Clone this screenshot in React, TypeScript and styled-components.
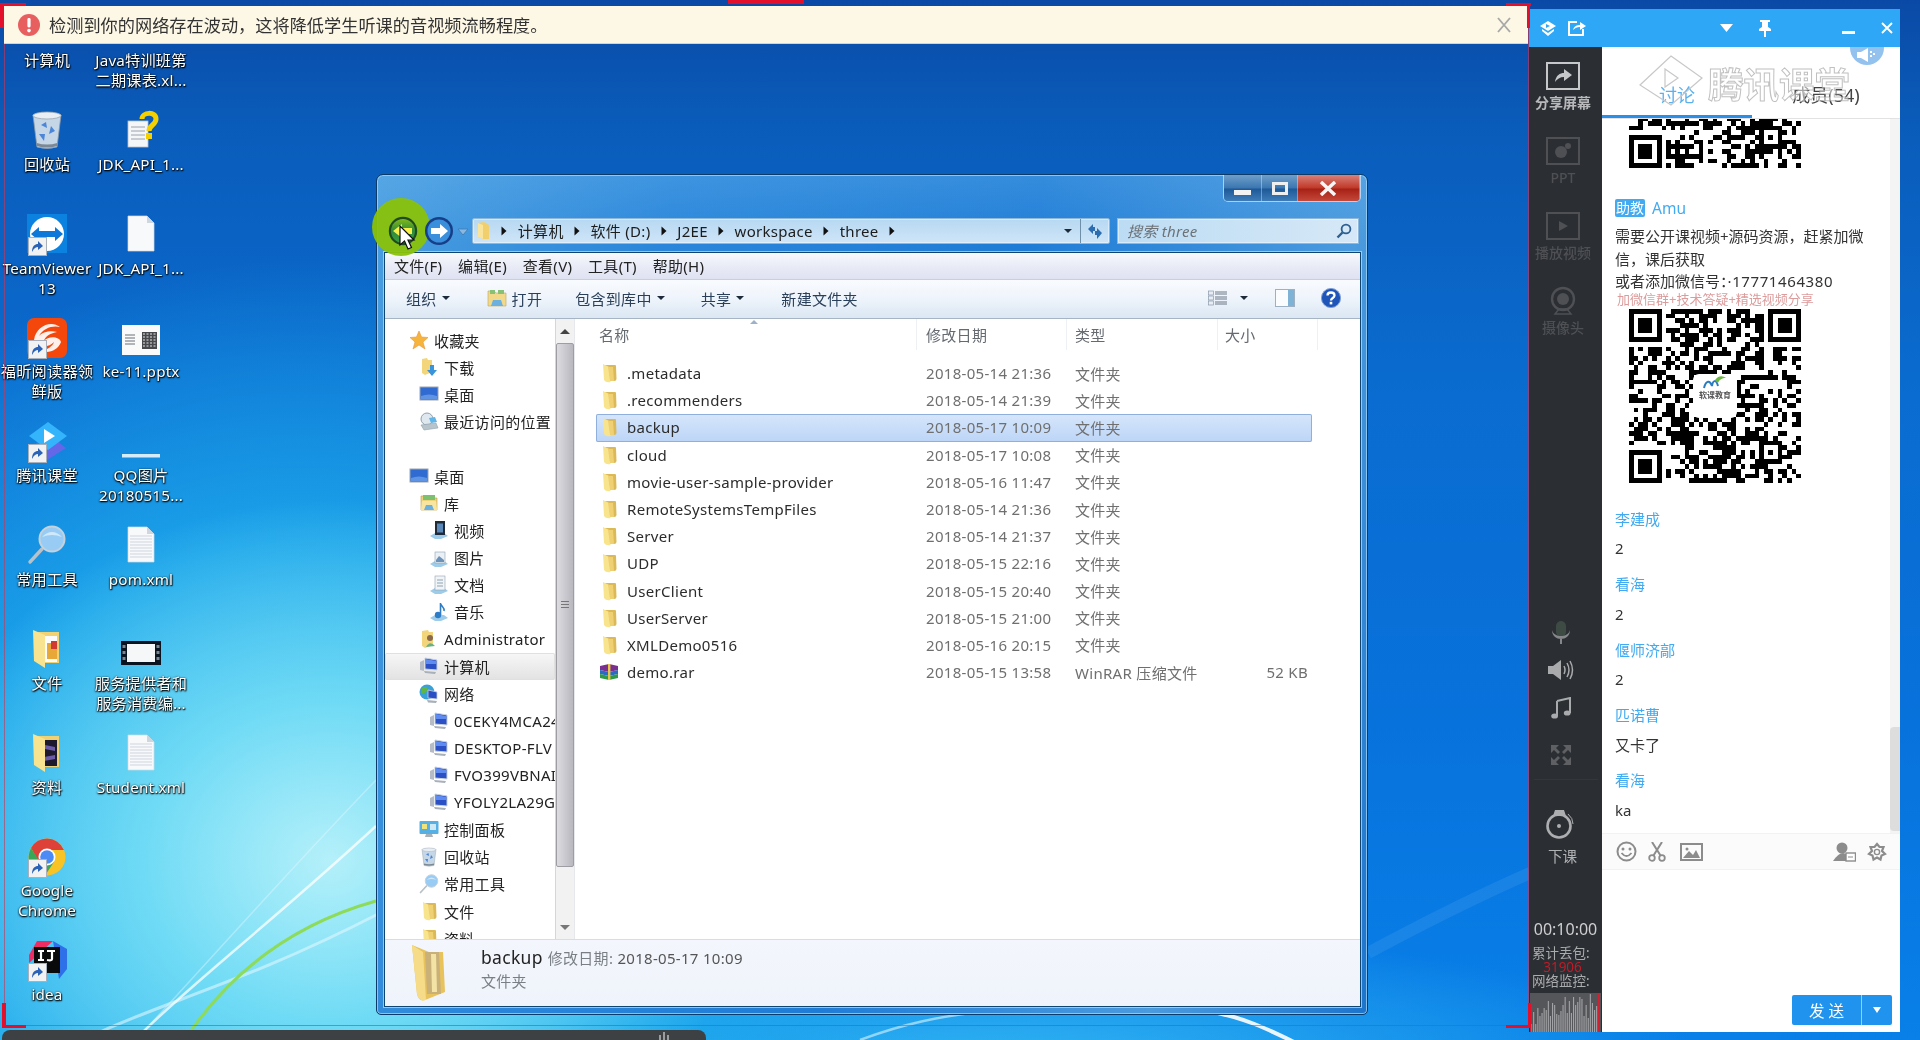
import React from "react";
import styled, { createGlobalStyle } from "styled-components";

const FONT = `"Noto Sans", "Noto Sans CJK SC", sans-serif`;

const Global = createGlobalStyle`
  html, body { margin: 0; padding: 0; width: 1920px; height: 1040px; overflow: hidden; background: #0a60c0; }
  * { box-sizing: border-box; }
  body { font-family: ${FONT}; }
`;

/* ---------- page ---------- */
const Desktop = styled.div`
  position: relative;
  width: 1920px;
  height: 1040px;
  overflow: hidden;
  filter: blur(0.35px);
  background:
    radial-gradient(ellipse 420px 360px at 330px 860px, #b4f0fa 0%, rgba(120, 224, 246, 0.85) 45%, rgba(60, 190, 240, 0) 100%),
    radial-gradient(ellipse 640px 640px at 300px 900px, #4cc8f2 0%, rgba(30, 170, 236, 0.9) 55%, rgba(14, 130, 226, 0) 100%),
    radial-gradient(ellipse 700px 130px at 1000px 1060px, #30b4f2 0%, rgba(30, 160, 240, 0) 100%),
    linear-gradient(180deg, #0a4aa6 0%, #0a5cba 12%, #0a6cd0 38%, #0872dc 70%, #0880e8 100%);
`;

const Wallpaper = styled.svg`
  position: absolute;
  left: 0;
  top: 0;
`;

const IconGrid = styled.div`
  position: absolute;
  left: 0;
  top: 3px;
  display: grid;
  grid-auto-flow: column;
  grid-template-rows: repeat(10, 103.8px);
  grid-template-columns: 94px 94px;
`;

const DeskItem = styled.div`
  display: flex;
  flex-direction: column;
  align-items: center;
`;

const DeskIconBox = styled.div`
  position: relative;
  width: 40px;
  height: 47px;
  display: flex;
  align-items: center;
  justify-content: center;
`;

const DeskLabel = styled.div`
  width: 94px;
  font-size: 15.2px;
  letter-spacing: 0.2px;
  line-height: 20px;
  color: #fff;
  text-align: center;
  white-space: pre-line;
  text-shadow: 0 1px 2px #000, 1px 1px 1px rgba(0, 0, 0, 0.7), 0 0 2px rgba(0, 0, 0, 0.6);
`;

const Badge = styled.svg`
  position: absolute;
  left: 1px;
  bottom: 2px;
`;

/* ---------- banner & frame ---------- */
const Banner = styled.div`
  position: absolute;
  left: 4px;
  top: 6px;
  width: 1524px;
  height: 38px;
  background: #fdf8e6;
  border-bottom: 1px solid #d8d4c0;
  display: flex;
  align-items: center;
  padding: 0 16px 0 14px;
  gap: 9px;
  z-index: 5;
`;

const BannerText = styled.span`
  flex: 1;
  font-size: 17.2px;
  color: #333;
  padding-bottom: 1px;
`;

const Corner = styled.div<{ $l: number; $t: number; $w: number; $h: number }>`
  position: absolute;
  left: ${(p) => p.$l}px;
  top: ${(p) => p.$t}px;
  width: ${(p) => p.$w}px;
  height: ${(p) => p.$h}px;
  background: #e2102a;
  z-index: 9;
`;

const ThinLine = styled(Corner)`
  background: rgba(214, 50, 80, 0.6);
  z-index: 3;
`;

const BottomBar = styled.div`
  position: absolute;
  left: 2px;
  top: 1030px;
  width: 704px;
  height: 10px;
  background: #3e4144;
  border-radius: 8px 8px 0 0;
  color: #ccc;
  display: flex;
  justify-content: flex-end;
  padding-right: 36px;
`;

/* ---------- explorer window ---------- */
const Win = styled.div`
  position: absolute;
  left: 376px;
  top: 174px;
  width: 992px;
  height: 841px;
  border: 1px solid #0d3a66;
  border-radius: 7px 7px 5px 5px;
  box-shadow: inset 0 0 0 1px rgba(170, 215, 245, 0.75);
  background:
    linear-gradient(180deg, rgba(120, 190, 240, 0.25) 0, rgba(30, 130, 220, 0) 70px),
    linear-gradient(105deg, #4a9ee0 0%, #2a86da 25%, #1f7cd6 55%, #4a9ade 82%, #1c74cc 100%);
  padding: 0 6px 7px 7px;
  display: flex;
  flex-direction: column;
  font-size: 15px;
  letter-spacing: 0.3px;
`;

const TitleBar = styled.div`
  height: 42px;
  display: flex;
  justify-content: flex-end;
  align-items: flex-start;
`;

const Captions = styled.div`
  width: 138px;
  height: 27px;
  display: flex;
  border: 1px solid rgba(255, 255, 255, 0.55);
  border-top: none;
  border-radius: 0 0 5px 5px;
  overflow: hidden;
`;

const CapBtn = styled.div<{ $w: number; $close?: boolean }>`
  width: ${(p) => p.$w}px;
  display: flex;
  align-items: center;
  justify-content: center;
  border-right: 1px solid rgba(255, 255, 255, 0.35);
  background: ${(p) =>
    p.$close
      ? "linear-gradient(180deg,#d88078 0%,#c23c2c 48%,#a82216 55%,#c4483a 100%)"
      : "linear-gradient(180deg,#6f9fca 0%,#3c78b2 48%,#1f5a98 55%,#3d7cb8 100%)"};
`;

const NavRow = styled.div`
  position: relative;
  z-index: 1;
  height: 27px;
  margin-bottom: 8px;
  padding-left: 4px;
  display: flex;
  align-items: center;
`;

const NavBtn = styled.svg`
  flex: none;
`;

const NavDrop = styled.svg`
  flex: none;
  margin: 2px 3px 0 3px;
`;

const Highlight = styled.div`
  position: absolute;
  left: -5px;
  top: 23px;
  width: 58px;
  height: 58px;
  border-radius: 50%;
  background: rgb(138, 194, 8);
  opacity: 0.95;
  pointer-events: none;
`;

const Cursor = styled.svg`
  position: absolute;
  left: 22px;
  top: 50px;
  z-index: 2;
`;

const AddressBar = styled.div`
  flex: 1;
  height: 26px;
  display: flex;
  align-items: center;
  background: linear-gradient(180deg, #b7d8f2, #cfe5f7);
  border: 1px solid #8db8dc;
  box-shadow: inset 0 0 0 1px rgba(255, 255, 255, 0.4);
  border-radius: 2px;
`;

const Crumbs = styled.div`
  flex: 1;
  display: flex;
  align-items: center;
  gap: 10.4px;
  padding-left: 4px;
  color: #1c1c1c;
  white-space: nowrap;
`;

const RefreshCell = styled.div`
  width: 29px;
  height: 100%;
  margin-left: 8px;
  border-left: 1px solid #6f8fa8;
  display: flex;
  align-items: center;
  justify-content: center;
`;

const SearchBox = styled.div`
  width: 242px;
  height: 26px;
  margin: 0 2px 0 7px;
  display: flex;
  align-items: center;
  justify-content: space-between;
  padding: 0 6px 0 9px;
  background: linear-gradient(90deg, #bcdcf3, #d6e8f7);
  border: 1px solid #8db8dc;
  box-shadow: inset 0 0 0 1px rgba(255, 255, 255, 0.4);
  font-style: italic;
  color: #6d7277;
`;

const Client = styled.div`
  flex: 1;
  min-height: 0;
  display: flex;
  flex-direction: column;
  background: #fff;
  border: 1px solid #0f4573;
  box-shadow: 0 0 0 1px rgba(190, 225, 250, 0.7);
`;

const MenuBar = styled.div`
  height: 27px;
  flex: none;
  display: flex;
  align-items: center;
  gap: 15.8px;
  padding: 0 0 2px 9px;
  color: #222;
  background: linear-gradient(180deg, #f8f9fd 0%, #e9ebf6 50%, #dfe2f1 100%);
  border-bottom: 1px solid #c8cfdf;
`;

const ToolBar = styled.div`
  height: 39px;
  flex: none;
  display: flex;
  align-items: center;
  padding: 0 19px 2px 21px;
  color: #2a3f5a;
  background: linear-gradient(180deg, #f9fbfe 0%, #eef4fb 50%, #dbe7f3 100%);
  border-bottom: 1px solid #a6b4c4;
`;

const ToolItem = styled.div<{ $mr?: number; $gap?: number }>`
  display: flex;
  align-items: center;
  gap: ${(p) => p.$gap ?? 5}px;
  margin-right: ${(p) => p.$mr ?? 0}px;
  white-space: nowrap;
`;

const Caret = styled.i`
  display: block;
  width: 0;
  height: 0;
  border-left: 4px solid transparent;
  border-right: 4px solid transparent;
  border-top: 4px solid #1c2a3a;
`;

const Spacer = styled.div`
  flex: 1;
`;

const Panes = styled.div`
  flex: 1;
  min-height: 0;
  display: flex;
`;

const NavPane = styled.div`
  width: 170px;
  flex: none;
  overflow: hidden;
  padding-top: 8px;
`;

const NavItem = styled.div<{ $level: number; $active?: boolean }>`
  height: 27.2px;
  display: flex;
  align-items: center;
  gap: 5px;
  padding: 0 0 1px ${(p) => 24 + p.$level * 10}px;
  color: #222;
  white-space: nowrap;
  overflow: hidden;
  background: ${(p) => (p.$active ? "linear-gradient(180deg,#f7f7f7,#e2e2e2)" : "none")};
  border-radius: 2px;
  box-shadow: ${(p) => (p.$active ? "inset 0 0 0 1px #e0e0e0" : "none")};

  svg {
    flex: none;
  }
`;

const NavGap = styled.div`
  height: 27.2px;
`;

const Scroll = styled.div`
  width: 20px;
  flex: none;
  background: #f2f2f3;
  border-left: 1px solid #d6d6d8;
  border-right: 1px solid #e6e8ec;
  display: flex;
  flex-direction: column;
  align-items: center;
`;

const ScrollBtn = styled.div`
  height: 24px;
  flex: none;
  display: flex;
  align-items: center;
  justify-content: center;
`;

const Thumb = styled.div`
  width: 18px;
  height: 524px;
  flex: none;
  background: linear-gradient(90deg, #dcdce0 0%, #c8c8ce 55%, #b8b8be 100%);
  border: 1px solid #9d9da3;
  border-radius: 2px;
  display: flex;
  align-items: center;
  justify-content: center;
`;

const Grip = styled.i`
  display: block;
  width: 8px;
  height: 8px;
  background: repeating-linear-gradient(180deg, #777 0 1px, transparent 1px 3px);
`;

const ArrowUp = styled.i`
  display: block;
  width: 0;
  height: 0;
  border-left: 5px solid transparent;
  border-right: 5px solid transparent;
  border-bottom: 5px solid #444;
`;

const ArrowDown = styled.i`
  display: block;
  width: 0;
  height: 0;
  border-left: 5px solid transparent;
  border-right: 5px solid transparent;
  border-top: 5px solid #777;
`;

const ListPane = styled.div`
  flex: 1;
  min-width: 0;
  position: relative;
`;

const ListHead = styled.div`
  height: 41px;
  display: grid;
  grid-template-columns: 342px 150px 151px 100px;
  color: #656a70;
`;

const HeadCell = styled.div<{ $pl: number }>`
  height: 31px;
  display: flex;
  align-items: center;
  padding-left: ${(p) => p.$pl}px;
  border-right: 1px solid #eef0f3;
`;

const SortMark = styled.i`
  position: absolute;
  left: 175px;
  top: 1px;
  width: 0;
  height: 0;
  border-left: 4px solid transparent;
  border-right: 4px solid transparent;
  border-bottom: 4px solid #9db2c9;
`;

const Row = styled.div<{ $sel?: boolean }>`
  margin-left: 21px;
  width: 716px;
  height: 27.2px;
  padding-bottom: 1px;
  display: grid;
  grid-template-columns: 31px 299px 149px 1fr auto;
  align-items: center;
  border-radius: 2px;
  background: ${(p) => (p.$sel ? "linear-gradient(180deg,#d6e6fb,#bcd5f7)" : "none")};
  box-shadow: ${(p) => (p.$sel ? "inset 0 0 0 1px #8fb0dc" : "none")};
`;

const RowIcon = styled.div`
  padding-left: 3px;
  display: flex;
  align-items: center;
`;

const RowName = styled.span`
  color: #2c2c2c;
`;

const RowMeta = styled.span`
  color: #6f6f6f;
  white-space: nowrap;
`;

const RowSize = styled(RowMeta)`
  padding-right: 4px;
`;

const Details = styled.div`
  height: 67px;
  flex: none;
  display: flex;
  align-items: center;
  gap: 35px;
  padding-left: 26px;
  background: linear-gradient(180deg, #f3f6fc, #eff3fb);
  border-top: 1px solid #d8dbe8;
`;

const DetailText = styled.div`
  display: flex;
  flex-direction: column;
  gap: 1px;
  margin-top: -10px;
`;

const DetailTop = styled.div`
  display: flex;
  align-items: baseline;
  gap: 5px;
  color: #555;
`;

const DetailName = styled.span`
  font-size: 17.5px;
  color: #222;
`;

const DetailLabel = styled.span`
  color: #7a7f86;
`;

const DetailType = styled.div`
  color: #7a7f86;
`;

/* ---------- classroom panel ---------- */
const Panel = styled.div`
  position: absolute;
  left: 1529px;
  top: 9px;
  width: 371px;
  height: 1023px;
  display: grid;
  grid-template-columns: 73px 298px;
  grid-template-rows: 38px 985px;
  background: #fff;
  z-index: 6;
`;

const PanelHead = styled.div`
  grid-column: 1 / 3;
  background: #2da7f6;
  display: flex;
  align-items: center;
  padding: 0 7px 0 11px;
`;

const Side = styled.div`
  background: #2b2e33;
  display: flex;
  flex-direction: column;
  align-items: center;
  min-height: 0;
`;

const SideTool = styled.div<{ $on?: boolean }>`
  height: 75px;
  width: 100%;
  padding: 14px 5px 0 0;
  display: flex;
  flex-direction: column;
  align-items: center;
  font-size: 14px;
  font-weight: ${(p) => (p.$on ? 600 : 500)};
  line-height: 16px;
  color: ${(p) => (p.$on ? "#b8b9bb" : "#4e5054")};
`;

const SideToolIcon = styled.div`
  height: 30px;
  margin-bottom: 4px;
  display: flex;
  align-items: center;
`;

const SideIcon = styled.div<{ $mt?: number }>`
  width: 100%;
  height: 30px;
  padding-right: 10px;
  margin-top: ${(p) => p.$mt ?? 0}px;
  display: flex;
  align-items: center;
  justify-content: center;
  flex: none;
`;

const SideRule = styled.div`
  width: 64px;
  height: 1px;
  margin-top: 9px;
  background: #33363b;
`;

const BellLabel = styled.div`
  margin-top: 9px;
  padding-right: 6px;
  font-size: 14.6px;
  line-height: 16px;
  color: #b0b1b3;
`;

const Stats = styled.div`
  margin-top: auto;
  width: 100%;
  display: flex;
  flex-direction: column;
  color: #aaabad;
`;

const Timer = styled.div`
  font-size: 16px;
  line-height: 20px;
  color: #cfcfd0;
  text-align: center;
  margin-bottom: 7px;
`;

const StatLabel = styled.div`
  font-size: 13.5px;
  line-height: 14px;
  padding-left: 3px;
`;

const StatValue = styled.div`
  font-size: 13.5px;
  line-height: 14px;
  color: #c41a26;
  text-align: center;
  padding-right: 6px;
`;

const Monitor = styled.svg`
  margin: 5px 0 0 1px;
  display: block;
`;

const Main = styled.div`
  display: flex;
  flex-direction: column;
  min-height: 0;
  position: relative;
`;

const Tabs = styled.div`
  height: 72px;
  flex: none;
  position: relative;
  display: grid;
  grid-template-columns: 150px 148px;
  border-bottom: 1px solid #e2e2e2;
  overflow: hidden;
`;

const Tab = styled.div<{ $on?: boolean }>`
  display: flex;
  justify-content: center;
  padding-top: 37px;
  font-size: 18px;
  line-height: 22px;
  color: ${(p) => (p.$on ? "#5ab0ee" : "#444")};
  border-bottom: 3px solid ${(p) => (p.$on ? "#2a8fe8" : "transparent")};
`;

const Watermark = styled.div`
  position: absolute;
  left: 106px;
  top: 14px;
  font-size: 35.5px;
  line-height: 46px;
  font-weight: 700;
  color: rgba(255, 255, 255, 0.5);
  -webkit-text-stroke: 1px rgba(150, 150, 150, 0.6);
  white-space: nowrap;
`;

const WatermarkLogo = styled.svg`
  position: absolute;
  left: 36px;
  top: 8px;
`;

const Megaphone = styled.div`
  position: absolute;
  left: 248px;
  top: -16px;
  width: 34px;
  height: 34px;
  border-radius: 50%;
  background: #94c2ef;
  display: flex;
  align-items: flex-end;
  justify-content: center;
  padding-bottom: 3px;
`;

const ChatWrap = styled.div`
  height: 714px;
  flex: none;
  display: flex;
`;

const Chat = styled.div`
  flex: 1;
  overflow: hidden;
  padding-left: 13px;
  color: #333;
`;

const QrClip = styled.div`
  height: 49px;
  width: 172px;
  margin-left: 14px;
  display: flex;
  align-items: flex-end;
  overflow: hidden;
`;

const QrSvg = styled.svg`
  flex: none;
  display: block;
`;

const Author = styled.div`
  margin-top: 31px;
  height: 18px;
  display: flex;
  align-items: center;
  gap: 7px;
  font-size: 15.5px;
  color: #41aaf0;
`;

const RoleTag = styled.span`
  width: 30px;
  height: 18px;
  background: #41aaf0;
  color: #fff;
  border-radius: 2px;
  font-size: 14px;
  line-height: 18px;
  text-align: center;
`;

const Msg = styled.div`
  width: 264px;
  margin-top: 8px;
  font-size: 15px;
  line-height: 22.6px;
`;

const WechatNo = styled.span`
  letter-spacing: 0.6px;
`;

const Promo = styled.div`
  margin-left: 2px;
  height: 16px;
  font-size: 13px;
  line-height: 13px;
  color: #dc9c9c;
  white-space: nowrap;
`;

const QrBlock = styled.div`
  position: relative;
  width: 172px;
  height: 174px;
  margin-left: 14px;
`;

const QrLogo = styled.div`
  position: absolute;
  left: 64px;
  top: 65px;
  width: 44px;
  height: 44px;
  background: #fff;
  border-radius: 6px;
  display: flex;
  flex-direction: column;
  align-items: center;
  font-size: 8px;
  line-height: 9px;
  font-weight: 700;
  color: #555;
`;

const Thread = styled.div`
  margin-top: 26px;
`;

const Pair = styled.div`
  margin-bottom: 15.8px;
`;

const Nick = styled.div`
  font-size: 15px;
  line-height: 20px;
  color: #41aaf0;
  margin-bottom: 9.6px;
`;

const Said = styled.div`
  font-size: 15px;
  line-height: 20px;
  color: #333;
`;

const ChatTrack = styled.div`
  width: 10px;
  flex: none;
  background: #f4f4f4;
  padding-top: 608px;
`;

const ChatThumb = styled.div`
  height: 104px;
  background: #dddddd;
  border-radius: 4px 0 0 4px;
`;

const InputBar = styled.div`
  height: 37px;
  flex: none;
  display: flex;
  align-items: center;
  gap: 11px;
  padding: 0 13px 0 14px;
  background: #fbfbfb;
  border-top: 1px solid #f2f2f2;
  border-bottom: 1px solid #f2f2f2;
`;

const Compose = styled.div`
  flex: 1;
  display: flex;
  justify-content: flex-end;
  align-items: flex-end;
  padding: 0 8px 7px 0;
`;

const SendBtn = styled.div`
  width: 100px;
  height: 30px;
  display: flex;
  background: #1f93ee;
  border-radius: 2px;
  color: #fff;
  font-size: 15.5px;
`;

const SendLabel = styled.div`
  width: 70px;
  display: flex;
  align-items: center;
  justify-content: center;
  border-right: 1px solid rgba(255, 255, 255, 0.55);
`;

const SendDrop = styled.div`
  flex: 1;
  display: flex;
  align-items: center;
  justify-content: center;
`;

const SendCaret = styled.i`
  display: block;
  width: 0;
  height: 0;
  border-left: 4px solid transparent;
  border-right: 4px solid transparent;
  border-top: 6px solid #fff;
`;

const HeadGap = styled.div<{ $w: number }>`
  width: ${(p) => p.$w}px;
  flex: none;
`;

/* ---------- drawings ---------- */
const Folder = ({ s = 20 }: { s?: number }) => (
  <svg width={s} height={s} viewBox="0 0 20 20">
    <path d="M6 2 H16 Q17 2 17 3 L17.5 16 Q17.5 18 15 18 H8 Z" fill="#dcb957" />
    <path d="M4 1 L10 4 L11.5 19 Q7 20 5 17 Z" fill="#f9e48e" />
    <path d="M9 4 H14 L15 18 H11 Z" fill="#efd072" />
  </svg>
);

const Computer = ({ s = 20 }: { s?: number }) => (
  <svg width={s} height={s} viewBox="0 0 20 20">
    <path d="M6 2 L18 4 L18 14 L6 13 Z" fill="#2b4fc4" stroke="#c9d2dc" strokeWidth="1" />
    <path d="M7 3 L17 5 L17 8 L7 8 Z" fill="#5f8cf0" />
    <path d="M1 6 L5 4 L5 15 L1 14 Z" fill="#b5bcc6" />
    <path d="M5 15 L17 16 L16 18 L6 17 Z" fill="#a8b0ba" />
  </svg>
);

const Arrow = () => (
  <svg width="6" height="10" viewBox="0 0 6 10" style={{ flex: "none" }}>
    <path d="M0.5 0.5 L5.5 5 L0.5 9.5 Z" fill="#111" />
  </svg>
);

const Doc = ({ lined }: { lined?: boolean }) => (
  <svg width="30" height="38" viewBox="0 0 30 38">
    <path d="M2 1 H21 L28 8 V36 H2 Z" fill="#f8f9fb" stroke="#d6dae0" strokeWidth="0.7" />
    <path d="M21 1 V8 H28 Z" fill="#d0d6de" />
    {lined && [10, 13, 16, 19, 22, 25, 28, 31].map((y) => <path key={y} d={`M4 ${y} H26`} stroke="#cfd5de" strokeWidth="1" />)}
  </svg>
);

const Shortcut = () => (
  <Badge width="19" height="19" viewBox="0 0 19 19">
    <rect x="0.5" y="0.5" width="18" height="18" fill="#f2f2f2" stroke="#a8b0bb" />
    <path d="M4 15 C4 9 7 7 10 7 V4 L15 9 L10 13 V10 C8 10 6 11 4 15 Z" fill="#2a62b8" />
  </Badge>
);

const Recycle = ({ s = 40 }: { s?: number }) => (
  <svg width={s} height={s} viewBox="0 0 40 40">
    <path d="M6 5 Q20 0 34 5 L30 37 Q20 40 10 37 Z" fill="#c5d6e6" stroke="#8e9aa6" strokeWidth="0.8" />
    <ellipse cx="20" cy="5.5" rx="14" ry="3.5" fill="#e8eef4" stroke="#9aa6b2" strokeWidth="0.8" />
    <path d="M14 15 L19 12 L20 18 Z M24 16 L28 21 L22 24 Z M12 24 L18 24 L17 31 Z" fill="#4c86d8" />
    <path d="M10 36 Q20 39 30 36 L30.4 33 Q20 36 9.7 33 Z" fill="#7c8894" />
  </svg>
);

const HelpDoc = () => (
  <svg width="40" height="40" viewBox="0 0 40 40">
    <rect x="7" y="11" width="20" height="26" fill="#f5f6f8" stroke="#b8c0cc" strokeWidth="0.8" />
    {[17, 21, 25, 29].map((y) => <path key={y} d={`M10 ${y} H24`} stroke="#9aa2ae" strokeWidth="1" />)}
    <path d="M21 9 C21 2 35 1 35 9 C35 15 28 15 28 21" fill="none" stroke="#f5d000" strokeWidth="5" />
    <rect x="25" y="23" width="6" height="6" fill="#f5d000" />
  </svg>
);

const TeamV = () => (
  <svg width="40" height="40" viewBox="0 0 40 40">
    <rect width="40" height="39" fill="#0c82e0" />
    <circle cx="20" cy="20" r="17" fill="#fff" />
    <path d="M4 20 L12 13 V17 H28 V13 L36 20 L28 27 V23 H12 V27 Z" fill="#0e78d8" />
  </svg>
);

const Foxit = () => (
  <svg width="40" height="40" viewBox="0 0 40 40">
    <rect width="40" height="40" rx="7" fill="#f4470c" />
    <path d="M7 22 C9 8 24 2 33 9 C26 7 16 10 12 18 C15 14 24 12 30 14 C24 15 18 18 17 23 C21 18 32 18 34 24 C31 32 22 36 14 33 C20 32 26 28 27 24 C22 30 10 30 7 22 Z" fill="#fff" opacity="0.92" />
  </svg>
);

const Tencent = () => (
  <svg width="40" height="40" viewBox="0 0 40 40">
    <path d="M4 26 L20 38 L39 26 L30 19 L12 19 Z" fill="#6468e8" />
    <path d="M2 14 L21 0 L40 14 L21 28 Z" fill="#34b4fb" />
    <path d="M17 7 L28 14 L17 21 Z" fill="#fff" />
  </svg>
);

const Lens = ({ s = 40 }: { s?: number }) => (
  <svg width={s} height={s} viewBox="0 0 40 40">
    <path d="M15 24 L3 37" stroke="#b8c0c8" strokeWidth="3.4" strokeLinecap="round" />
    <circle cx="25" cy="14" r="12.5" fill="#98ccf4" stroke="#c5d2dc" strokeWidth="2" />
    <path d="M15 12 Q25 2 35 12 Q25 8 15 12 Z" fill="#cfe8fb" />
  </svg>
);

const BigFolder = ({ inner }: { inner: "colors" | "dark" }) => (
  <svg width="30" height="40" viewBox="0 0 30 40">
    <path d="M6 3 H27 V34 H10 Z" fill="#f0d272" />
    <path d="M10 7 H25 V33 H10 Z" fill={inner === "dark" ? "#1c1a2c" : "#fbfbfb"} />
    {inner === "colors" ? (
      <path d="M15 14 H25 V30 H15 Z" fill="#e8a838" />
    ) : (
      <path d="M13 12 L23 14 V18 L13 16 Z M12 24 L23 22 V26 L12 28 Z" fill="#6c5ca8" />
    )}
    {inner === "colors" && <path d="M19 12 H25 V20 H19 Z" fill="#d03a30" />}
    <path d="M1 1 L13 6 V39 L2 32 Z" fill="#f8e391" />
  </svg>
);

const Film = () => (
  <svg width="40" height="26" viewBox="0 0 40 26">
    <rect width="40" height="24" fill="#0a1420" />
    <rect x="6" y="3" width="28" height="18" fill="#f6f7f9" />
    {[4, 10, 16].map((y) => <rect key={y} x="1.5" y={y} width="3" height="3" fill="#7a8692" />)}
    {[4, 10, 16].map((y) => <rect key={y + 1} x="35.5" y={y} width="3" height="3" fill="#7a8692" />)}
  </svg>
);

const Chrome = () => (
  <svg width="38" height="38" viewBox="0 0 38 38">
    <circle cx="19" cy="19" r="18.5" fill="#f7c325" />
    <path d="M19 0.5 A18.5 18.5 0 0 0 3 10 L11 24 L19 12 H36 A18.5 18.5 0 0 0 19 0.5 Z" fill="#de4137" />
    <path d="M3 10 A18.5 18.5 0 0 0 17 37.4 L26 24 H12 Z" fill="#3aa757" />
    <circle cx="19" cy="19" r="8.5" fill="#fff" />
    <circle cx="19" cy="19" r="6.8" fill="#4c8bf5" />
  </svg>
);

const Idea = () => (
  <svg width="40" height="40" viewBox="0 0 40 40">
    <path d="M2 14 L10 0 H26 L2 22 Z" fill="#f02d62" />
    <path d="M26 0 L40 8 V28 L32 38 Z" fill="#2e70e8" />
    <rect x="7" y="6" width="26" height="26" fill="#0a0a0a" />
    <path d="M11 10 H17 M14 10 V19 M11 19 H17 M20 10 H28 M25 10 V18 Q25 20 20 19" stroke="#fff" strokeWidth="2.2" fill="none" />
    <path d="M11 28 H19" stroke="#fff" strokeWidth="1.5" />
  </svg>
);

const PptThumb = () => (
  <svg width="38" height="30" viewBox="0 0 38 30" style={{ marginTop: 4 }}>
    <rect width="38" height="30" fill="#fafafa" />
    {[10, 13, 16, 19].map((y) => <path key={y} d={`M3 ${y} H13`} stroke="#8a8f96" strokeWidth="1.3" />)}
    <rect x="20" y="7" width="15" height="17" fill="#47494d" />
    {[9, 12, 15, 18, 21].map((y) => <path key={y} d={`M21 ${y} H34`} stroke="#e8e8e8" strokeWidth="1" strokeDasharray="2 1.5" />)}
  </svg>
);

const ThinStrip = () => (
  <svg width="38" height="30" viewBox="0 0 38 30" style={{ marginTop: 30 }}>
    <rect y="12" width="38" height="3.5" fill="#d6ecfa" />
  </svg>
);

type Item = { label: string; icon: React.ReactNode; link?: boolean };
const desk: Item[] = [
  { label: "计算机", icon: null },
  { label: "回收站", icon: <Recycle /> },
  { label: "TeamViewer\n13", icon: <TeamV />, link: true },
  { label: "福昕阅读器领\n鲜版", icon: <Foxit />, link: true },
  { label: "腾讯课堂", icon: <Tencent />, link: true },
  { label: "常用工具", icon: <Lens /> },
  { label: "文件", icon: <BigFolder inner="colors" /> },
  { label: "资料", icon: <BigFolder inner="dark" /> },
  { label: "Google\nChrome", icon: <Chrome />, link: true },
  { label: "idea", icon: <Idea />, link: true },
  { label: "Java特训班第\n二期课表.xl...", icon: null },
  { label: "JDK_API_1...", icon: <HelpDoc /> },
  { label: "JDK_API_1...", icon: <Doc /> },
  { label: "ke-11.pptx", icon: <PptThumb /> },
  { label: "QQ图片\n20180515...", icon: <ThinStrip /> },
  { label: "pom.xml", icon: <Doc lined /> },
  { label: "服务提供者和\n服务消费编...", icon: <span style={{ marginTop: 14 }}><Film /></span> },
  { label: "Student.xml", icon: <Doc lined /> },
];

const SmStar = () => (
  <svg width="20" height="20" viewBox="0 0 20 20">
    <path d="M10 1 L12.5 7 L19 7.5 L14 12 L16 19 L10 15 L4 19 L6 12 L1 7.5 L7.5 7 Z" fill="#f7b43c" stroke="#e8943a" strokeWidth="0.6" />
  </svg>
);
const SmDownload = () => (
  <svg width="20" height="20" viewBox="0 0 20 20">
    <path d="M3 2 L8 1 L9 3 H13 L13 15 L6 18 L3 16 Z" fill="#f3d67c" />
    <path d="M11 8 H15 V13 H18 L13 19 L8 13 H11 Z" fill="#3a94dc" />
  </svg>
);
const SmDesktop = () => (
  <svg width="20" height="20" viewBox="0 0 20 20">
    <rect x="1" y="3" width="18" height="13" fill="#2f6bd0" stroke="#9aa6b2" />
    <path d="M2 12 Q10 9 18 12 V15 H2 Z" fill="#5f94e4" />
  </svg>
);
const SmRecent = () => (
  <svg width="20" height="20" viewBox="0 0 20 20">
    <circle cx="8" cy="7" r="6" fill="#dfe8ee" stroke="#8ea2ae" />
    <path d="M2 13 L17 11 L19 16 L5 18 Z" fill="#b8c4cc" stroke="#8ea2ae" strokeWidth="0.6" />
    <path d="M10 6 L16 5 L18 10 L12 11 Z" fill="#5fb4e8" />
  </svg>
);
const SmLib = () => (
  <svg width="20" height="20" viewBox="0 0 20 20">
    <path d="M2 3 H8 L10 5 H18 V17 H2 Z" fill="#f0d27a" stroke="#b99c48" strokeWidth="0.6" />
    <path d="M4 2 H16 V7 H4 Z" fill="#7cc070" />
    <path d="M3 8 H17 L18 17 H2 Z" fill="#f8e6a0" />
    <path d="M7 12 H13 L15 17 H5 Z" fill="#6cb0e0" />
  </svg>
);
const SmVideo = () => (
  <svg width="20" height="20" viewBox="0 0 20 20">
    <path d="M1 16 L6 13 H15 L19 16 L12 19 H6 Z" fill="#9dcbea" />
    <rect x="6" y="1" width="10" height="14" fill="#1f2a38" />
    <rect x="8" y="3.5" width="6" height="9" fill="#5a88b8" />
  </svg>
);
const SmImage = () => (
  <svg width="20" height="20" viewBox="0 0 20 20">
    <path d="M1 16 L6 13 H15 L19 16 L12 19 H6 Z" fill="#9dcbea" />
    <rect x="6" y="4" width="10" height="11" fill="#eaf0f6" stroke="#8ea2ae" strokeWidth="0.6" />
    <path d="M7 12 L10 8 L15 12 V14 H7 Z" fill="#6b92b8" />
  </svg>
);
const SmDocLib = () => (
  <svg width="20" height="20" viewBox="0 0 20 20">
    <path d="M1 16 L6 13 H15 L19 16 L12 19 H6 Z" fill="#9dcbea" />
    <rect x="6" y="1" width="10" height="14" fill="#f2f5f8" stroke="#8ea2ae" strokeWidth="0.6" />
    <path d="M8 5 H14 M8 8 H14 M8 11 H14" stroke="#8ea2ae" />
  </svg>
);
const SmMusic = () => (
  <svg width="20" height="20" viewBox="0 0 20 20">
    <path d="M1 16 L6 13 H15 L19 16 L12 19 H6 Z" fill="#9dcbea" />
    <circle cx="9" cy="13" r="3.2" fill="#2f7cc6" />
    <path d="M11.5 13 V1 C12 5 16 5 15 9" fill="none" stroke="#2f7cc6" strokeWidth="1.6" />
  </svg>
);
const SmUser = () => (
  <svg width="20" height="20" viewBox="0 0 20 20">
    <path d="M3 2 L9 1 L10 3 H14 V16 L6 19 L3 17 Z" fill="#f3d67c" />
    <circle cx="11" cy="9" r="3" fill="#8a6a4a" />
    <path d="M7 18 Q11 11 16 17 Z" fill="#6cb080" />
  </svg>
);
const SmNet = () => (
  <svg width="20" height="20" viewBox="0 0 20 20">
    <circle cx="8" cy="8" r="7.5" fill="#3aa0d8" />
    <path d="M3 4 Q8 1 9 6 Q5 11 2 9 Z" fill="#5eb648" />
    <path d="M9 6 L18 8 L18 15 L9 14 Z" fill="#2b4fc4" stroke="#c9d2dc" strokeWidth="0.8" />
    <path d="M8 16 L18 17 L17 19 L9 18.5 Z" fill="#a8b0ba" />
  </svg>
);
const SmPanel = () => (
  <svg width="20" height="20" viewBox="0 0 20 20">
    <rect x="0.5" y="2" width="19" height="13" rx="1" fill="#56b0e4" />
    <rect x="3" y="5" width="5" height="5" fill="#f2e27a" />
    <rect x="11" y="5" width="6" height="6" fill="#cfe8f6" />
    <path d="M7 15 H13 L14 18 H6 Z" fill="#a8b0ba" />
  </svg>
);

type Nav = { t: string; l: number; i: React.ReactNode; a?: boolean } | null;
const nav: Nav[] = [
  { t: "收藏夹", l: 0, i: <SmStar /> },
  { t: "下载", l: 1, i: <SmDownload /> },
  { t: "桌面", l: 1, i: <SmDesktop /> },
  { t: "最近访问的位置", l: 1, i: <SmRecent /> },
  null,
  { t: "桌面", l: 0, i: <SmDesktop /> },
  { t: "库", l: 1, i: <SmLib /> },
  { t: "视频", l: 2, i: <SmVideo /> },
  { t: "图片", l: 2, i: <SmImage /> },
  { t: "文档", l: 2, i: <SmDocLib /> },
  { t: "音乐", l: 2, i: <SmMusic /> },
  { t: "Administrator", l: 1, i: <SmUser /> },
  { t: "计算机", l: 1, i: <Computer />, a: true },
  { t: "网络", l: 1, i: <SmNet /> },
  { t: "0CEKY4MCA24", l: 2, i: <Computer /> },
  { t: "DESKTOP-FLV", l: 2, i: <Computer /> },
  { t: "FVO399VBNAI", l: 2, i: <Computer /> },
  { t: "YFOLY2LA29G", l: 2, i: <Computer /> },
  { t: "控制面板", l: 1, i: <SmPanel /> },
  { t: "回收站", l: 1, i: <Recycle s={20} /> },
  { t: "常用工具", l: 1, i: <Lens s={20} /> },
  { t: "文件", l: 1, i: <Folder /> },
  { t: "资料", l: 1, i: <Folder /> },
];

const files = [
  [".metadata", "2018-05-14 21:36"],
  [".recommenders", "2018-05-14 21:39"],
  ["backup", "2018-05-17 10:09"],
  ["cloud", "2018-05-17 10:08"],
  ["movie-user-sample-provider", "2018-05-16 11:47"],
  ["RemoteSystemsTempFiles", "2018-05-14 21:36"],
  ["Server", "2018-05-14 21:37"],
  ["UDP", "2018-05-15 22:16"],
  ["UserClient", "2018-05-15 20:40"],
  ["UserServer", "2018-05-15 21:00"],
  ["XMLDemo0516", "2018-05-16 20:15"],
];

const Rar = () => (
  <svg width="20" height="18" viewBox="0 0 20 18">
    <path d="M1 3 L10 1 L19 3 V7 L10 9 L1 7 Z" fill="#7b2f8e" />
    <path d="M1 7 L10 9 L19 7 V11 L10 13 L1 11 Z" fill="#2a6bc4" />
    <path d="M1 11 L10 13 L19 11 V15 L10 17 L1 15 Z" fill="#2f9a48" />
    <rect x="9" y="1" width="2.4" height="16" fill="#e8c84a" />
  </svg>
);

/* QR code drawing */
const makeQr = (seed: number, n = 37): string => {
  let x = seed;
  const rnd = () => {
    x ^= x << 13;
    x ^= x >>> 17;
    x ^= x << 5;
    return (x >>> 0) / 4294967296;
  };
  const m: boolean[][] = [];
  for (let r = 0; r < n; r++) {
    m.push([]);
    for (let c = 0; c < n; c++) m[r].push(rnd() > 0.5);
  }
  const blank = (r0: number, c0: number, s: number) => {
    for (let r = r0; r < r0 + s; r++) for (let c = c0; c < c0 + s; c++) if (m[r] && c >= 0 && c < n) m[r][c] = false;
  };
  const finder = (r0: number, c0: number, size = 7) => {
    for (let r = 0; r < size; r++)
      for (let c = 0; c < size; c++) {
        const edge = r === 0 || c === 0 || r === size - 1 || c === size - 1;
        const inner = size === 7 ? r >= 2 && r <= 4 && c >= 2 && c <= 4 : r === 2 && c === 2;
        m[r0 + r][c0 + c] = edge || inner;
      }
  };
  blank(0, 0, 8);
  blank(0, n - 8, 8);
  blank(n - 8, 0, 8);
  finder(0, 0);
  finder(0, n - 7);
  finder(n - 7, 0);
  finder(n - 9, n - 9, 5);
  let d = "";
  for (let r = 0; r < n; r++) {
    let c = 0;
    while (c < n) {
      if (!m[r][c]) {
        c++;
        continue;
      }
      let e = c;
      while (e < n && m[r][e]) e++;
      d += `M${c} ${r}h${e - c}v1h-${e - c}z`;
      c = e;
    }
  }
  return d;
};
const qrA = makeQr(90210);
const qrB = makeQr(4711);

const Qr = ({ d }: { d: string }) => (
  <QrSvg width="172" height="174" viewBox="0 0 37 37" shapeRendering="crispEdges" preserveAspectRatio="none">
    <path d={d} fill="#000" />
  </QrSvg>
);

const bars = Array.from({ length: 33 }, (_, i) => 8 + ((i * 37 + (i * i) % 17) % 26) + (i > 12 ? 6 : 0));

const chats = [
  ["李建成", "2"],
  ["看海", "2"],
  ["偃师济鄗", "2"],
  ["匹诺曹", "又卡了"],
  ["看海", "ka"],
];

export default function App() {
  return (
    <>
      <Global />
      <Desktop>
        <Wallpaper width="1920" height="1040" viewBox="0 0 1920 1040">
          <path d="M100 1032 C170 1000 250 980 380 913" stroke="#dff6ff" strokeWidth="3" fill="none" opacity="0.6" />
          <path d="M143 1032 C190 985 280 915 376 826" stroke="#fff" strokeWidth="2.5" fill="none" opacity="0.75" />
          <path d="M145 1030 C210 960 280 880 376 780" stroke="#e6f8ff" strokeWidth="1.5" fill="none" opacity="0.4" />
          <path d="M190 1032 C230 975 290 925 376 901" stroke="#8edb5a" strokeWidth="3" fill="none" />
          <path d="M860 1040 C900 1025 940 1015 1000 1010" stroke="#bfeaff" strokeWidth="2.5" fill="none" opacity="0.7" />
          <path d="M1200 1010 C1240 1015 1270 1030 1300 1045" stroke="#fff" strokeWidth="4" fill="none" opacity="0.9" />
          <path d="M1368 953 C1420 925 1480 895 1530 873" stroke="#3a98ea" strokeWidth="12" fill="none" opacity="0.35" />
        </Wallpaper>

        <IconGrid>
          {desk.map((d, i) => (
            <DeskItem key={i}>
              <DeskIconBox>
                {d.icon}
                {d.link && <Shortcut />}
              </DeskIconBox>
              <DeskLabel>{d.label}</DeskLabel>
            </DeskItem>
          ))}
        </IconGrid>

        <Win>
          <Highlight />
          <TitleBar>
            <Captions>
              <CapBtn $w={39}>
                <svg width="17" height="6" viewBox="0 0 17 6" style={{ marginTop: 9 }}>
                  <rect width="17" height="5" fill="#f2f2f2" />
                </svg>
              </CapBtn>
              <CapBtn $w={36}>
                <svg width="16" height="13" viewBox="0 0 16 13">
                  <rect x="1.5" y="1.5" width="13" height="10" fill="none" stroke="#eee" strokeWidth="3" />
                </svg>
              </CapBtn>
              <CapBtn $close $w={63}>
                <svg width="18" height="15" viewBox="0 0 18 15">
                  <path d="M2 1 L16 14 M16 1 L2 14" stroke="#f6f6f6" strokeWidth="3.5" />
                </svg>
              </CapBtn>
            </Captions>
          </TitleBar>

          <NavRow>
            <NavBtn width="30" height="30" viewBox="0 0 30 30">
              <defs>
                <linearGradient id="backBtn" x1="0" y1="0" x2="0" y2="1">
                  <stop offset="0" stopColor="#7fb81a" />
                  <stop offset="0.5" stopColor="#2f8a3a" />
                  <stop offset="1" stopColor="#3fa040" />
                </linearGradient>
              </defs>
              <circle cx="15" cy="15" r="14.2" fill="#1f4a22" />
              <circle cx="15" cy="15" r="12" fill="url(#backBtn)" />
              <path d="M5 15 L14 8 V12 H24 V18 H14 V22 Z" fill="#f7ef4a" />
            </NavBtn>
            <NavBtn width="30" height="30" viewBox="0 0 30 30" style={{ marginLeft: 6 }}>
              <circle cx="15" cy="15" r="14" fill="#173f88" />
              <circle cx="15" cy="15" r="11.5" fill="#3a8fdc" />
              <path d="M24 15 L16 8 V12 H7 V18 H16 V22 Z" fill="#fff" />
            </NavBtn>
            <NavDrop width="12" height="8" viewBox="0 0 12 8">
              <path d="M1 1 H11 L6 7 Z" fill="#8ab8e0" stroke="#3f78b0" strokeWidth="0.8" />
            </NavDrop>
            <AddressBar>
              <Crumbs>
                <svg width="14" height="20" viewBox="0 0 14 20">
                  <path d="M1 2 L7 1 L12 4 V18 H6 L1 16 Z" fill="#f0cf6c" />
                  <path d="M1 2 L6 4 V18 L1 16 Z" fill="#f8e49a" />
                </svg>
                <Arrow />
                <span>计算机</span>
                <Arrow />
                <span>软件 (D:)</span>
                <Arrow />
                <span>J2EE</span>
                <Arrow />
                <span>workspace</span>
                <Arrow />
                <span>three</span>
                <Arrow />
              </Crumbs>
              <Caret />
              <RefreshCell>
                <svg width="16" height="16" viewBox="0 0 16 16">
                  <path d="M1 6 L6 1 V4 H8 V8 H6 V11 Z" fill="#2c6cb0" />
                  <path d="M15 9 L10 4 V7 H8 V11 H10 V15 Z" fill="#2c6cb0" transform="translate(0 1)" />
                </svg>
              </RefreshCell>
            </AddressBar>
            <SearchBox>
              <span>搜索 three</span>
              <svg width="16" height="16" viewBox="0 0 16 16">
                <circle cx="10" cy="6" r="4.4" fill="none" stroke="#2d5f90" strokeWidth="1.8" />
                <path d="M6.5 9.5 L1.5 14.5" stroke="#2d5f90" strokeWidth="2.4" />
              </svg>
            </SearchBox>
          </NavRow>

          <Client>
            <MenuBar>
              <span>文件(F)</span>
              <span>编辑(E)</span>
              <span>查看(V)</span>
              <span>工具(T)</span>
              <span>帮助(H)</span>
            </MenuBar>
            <ToolBar>
              <ToolItem $mr={37}>
                组织 <Caret />
              </ToolItem>
              <ToolItem $mr={33} $gap={5}>
                <svg width="20" height="18" viewBox="0 0 20 18">
                  <path d="M1 2 H7 L9 4 H19 V17 H1 Z" fill="#f2d98a" stroke="#bfa458" strokeWidth="0.6" />
                  <path d="M3 1 H8 V5 H3 Z M11 1 H17 V5 H11 Z" fill="#88c078" />
                  <path d="M6 11 H14 L16 17 H4 Z" fill="#6cb0e0" />
                </svg>
                打开
              </ToolItem>
              <ToolItem $mr={36}>
                包含到库中 <Caret />
              </ToolItem>
              <ToolItem $mr={37}>
                共享 <Caret />
              </ToolItem>
              <ToolItem>新建文件夹</ToolItem>
              <Spacer />
              <ToolItem $mr={27} $gap={13}>
                <svg width="19" height="16" viewBox="0 0 19 16">
                  {[1, 6, 11].map((y) => (
                    <g key={y}>
                      <rect x="0.5" y={y} width="5" height="4" fill="#e8edf3" stroke="#8a99ab" strokeWidth="0.7" />
                      <path d={`M7 ${y + 1} H19 M7 ${y + 3} H19`} stroke="#6a7686" />
                    </g>
                  ))}
                </svg>
                <Caret />
              </ToolItem>
              <ToolItem $mr={26}>
                <svg width="20" height="18" viewBox="0 0 20 18">
                  <rect x="0.5" y="0.5" width="19" height="17" fill="#fbfcfe" stroke="#9fb0c2" />
                  <rect x="13" y="1" width="6" height="16" fill="#7fb3d6" />
                </svg>
              </ToolItem>
              <svg width="20" height="20" viewBox="0 0 20 20">
                <circle cx="10" cy="10" r="9.6" fill="#1f55b8" stroke="#7f9fd6" />
                <path d="M6.5 7.5 C6.5 3.5 13.5 3.5 13.5 7.5 C13.5 10 10 10 10 12.5" fill="none" stroke="#fff" strokeWidth="2.3" />
                <rect x="8.7" y="13.8" width="2.6" height="2.6" fill="#fff" />
              </svg>
            </ToolBar>

            <Panes>
              <NavPane>
                {nav.map((n, i) =>
                  n ? (
                    <NavItem key={i} $level={n.l} $active={n.a}>
                      {n.i}
                      <span>{n.t}</span>
                    </NavItem>
                  ) : (
                    <NavGap key={i} />
                  ),
                )}
              </NavPane>
              <Scroll>
                <ScrollBtn>
                  <ArrowUp />
                </ScrollBtn>
                <Thumb>
                  <Grip />
                </Thumb>
                <Spacer />
                <ScrollBtn>
                  <ArrowDown />
                </ScrollBtn>
              </Scroll>
              <ListPane>
                <SortMark />
                <ListHead>
                  <HeadCell $pl={24}>名称</HeadCell>
                  <HeadCell $pl={9}>修改日期</HeadCell>
                  <HeadCell $pl={8}>类型</HeadCell>
                  <HeadCell $pl={7}>大小</HeadCell>
                </ListHead>
                {files.map(([n, d]) => (
                  <Row key={n} $sel={n === "backup"}>
                    <RowIcon>
                      <Folder s={20} />
                    </RowIcon>
                    <RowName>{n}</RowName>
                    <RowMeta>{d}</RowMeta>
                    <RowMeta>文件夹</RowMeta>
                    <span />
                  </Row>
                ))}
                <Row>
                  <RowIcon>
                    <Rar />
                  </RowIcon>
                  <RowName>demo.rar</RowName>
                  <RowMeta>2018-05-15 13:58</RowMeta>
                  <RowMeta>WinRAR 压缩文件</RowMeta>
                  <RowSize>52 KB</RowSize>
                </Row>
              </ListPane>
            </Panes>

            <Details>
              <svg width="35" height="58" viewBox="0 0 35 58">
                <path d="M1 1 L18 8 H32 L34 48 L14 56 Q8 58 6 50 Z" fill="#e8c25a" />
                <path d="M14 8 H28 L30 50 H16 Z" fill="#c9b078" />
                <path d="M20 10 H25 L26 48 H21 Z" fill="#f3e3a4" />
                <path d="M1 1 L12 8 L15 56 Q8 58 6 50 Z" fill="#f6dc88" />
              </svg>
              <DetailText>
                <DetailTop>
                  <DetailName>backup</DetailName>
                  <span>
                    <DetailLabel>修改日期:</DetailLabel> 2018-05-17 10:09
                  </span>
                </DetailTop>
                <DetailType>文件夹</DetailType>
              </DetailText>
            </Details>
          </Client>

          <Cursor width="18" height="26" viewBox="0 0 18 26">
            <path d="M1 1 V20 L5.5 16 L9 24 L12.5 22.5 L9 15 H15 Z" fill="#fff" stroke="#111" strokeWidth="1.2" />
          </Cursor>
        </Win>

        <BottomBar>
          <svg width="12" height="10" viewBox="0 0 12 10">
            <path d="M6 2 V10 M2 5 V10 M10 5 V10" stroke="#bbb" strokeWidth="1.5" />
          </svg>
        </BottomBar>

        <ThinLine $l={4} $t={28} $w={1} $h={976} />
        <ThinLine $l={26} $t={1025} $w={1480} $h={1} />
        <ThinLine $l={1528} $t={28} $w={1} $h={976} />

        <Banner>
          <svg width="22" height="22" viewBox="0 0 22 22">
            <circle cx="11" cy="11" r="11" fill="#e85f5f" />
            <rect x="9.4" y="4" width="3.2" height="9.5" rx="1.4" fill="#fff" />
            <circle cx="11" cy="16.6" r="1.8" fill="#fff" />
          </svg>
          <BannerText>检测到你的网络存在波动，这将降低学生听课的音视频流畅程度。</BannerText>
          <svg width="16" height="16" viewBox="0 0 16 16">
            <path d="M2 1 L14 15 M14 1 L2 15" stroke="#a8a8a8" strokeWidth="1.9" />
          </svg>
        </Banner>

        <Panel>
          <PanelHead>
            <svg width="16" height="15" viewBox="0 0 16 15">
              <path d="M8 0 L16 5 L8 10 L0 5 Z" fill="#fff" />
              <path d="M2 8 L8 12 L14 8 L14 10 L8 15 L2 10 Z" fill="#fff" />
              <path d="M6 3 L10 5 L6 7 Z" fill="#2da7f6" />
            </svg>
            <HeadGap $w={12} />
            <svg width="18" height="16" viewBox="0 0 18 16">
              <path d="M9 2 H1 V15 H15 V9" fill="none" stroke="#fff" strokeWidth="2" />
              <path d="M5 10 C6 6 9 5 12 5 V2 L18 6 L12 10 V7 C9 7 7 8 5 10 Z" fill="#fff" />
            </svg>
            <HeadGap $w={134} />
            <svg width="13" height="8" viewBox="0 0 13 8">
              <path d="M0 0 H13 L6.5 8 Z" fill="#fff" />
            </svg>
            <HeadGap $w={25} />
            <svg width="14" height="17" viewBox="0 0 14 17">
              <path d="M2 0 H12 V2 H10 V7 L13 9 V11 H8 V17 H6 V11 H1 V9 L4 7 V2 H2 Z" fill="#fff" />
            </svg>
            <Spacer />
            <svg width="13" height="3" viewBox="0 0 13 3" style={{ marginTop: 9 }}>
              <rect width="13" height="3" fill="#fff" />
            </svg>
            <HeadGap $w={26} />
            <svg width="12" height="12" viewBox="0 0 12 12">
              <path d="M1 1 L11 11 M11 1 L1 11" stroke="#fff" strokeWidth="1.9" />
            </svg>
          </PanelHead>

          <Side>
            <SideTool $on>
              <SideToolIcon>
                <svg width="34" height="28" viewBox="0 0 34 28">
                  <rect x="1" y="1" width="32" height="26" fill="none" stroke="#c6c7c9" strokeWidth="2" />
                  <path d="M9 20 C10 13 14 11 18 11 V7 L26 13 L18 19 V15 C14 15 11 17 9 20 Z" fill="#c6c7c9" />
                </svg>
              </SideToolIcon>
              分享屏幕
            </SideTool>
            <SideTool>
              <SideToolIcon>
                <svg width="34" height="28" viewBox="0 0 34 28">
                  <rect x="1" y="1" width="32" height="26" fill="none" stroke="#4e5054" strokeWidth="2" />
                  <circle cx="15" cy="15" r="6" fill="#4e5054" />
                  <circle cx="22" cy="9" r="3" fill="#4e5054" />
                </svg>
              </SideToolIcon>
              PPT
            </SideTool>
            <SideTool>
              <SideToolIcon>
                <svg width="34" height="28" viewBox="0 0 34 28">
                  <rect x="1" y="1" width="32" height="26" fill="none" stroke="#4e5054" strokeWidth="2" />
                  <path d="M13 9 L22 14 L13 19 Z" fill="#4e5054" />
                </svg>
              </SideToolIcon>
              播放视频
            </SideTool>
            <SideTool>
              <SideToolIcon>
                <svg width="26" height="30" viewBox="0 0 26 30">
                  <circle cx="13" cy="13" r="11" fill="none" stroke="#4e5054" strokeWidth="2.4" />
                  <circle cx="13" cy="13" r="6" fill="#4e5054" />
                  <path d="M5 28 H21 L17 23 H9 Z" fill="none" stroke="#4e5054" strokeWidth="1.5" />
                </svg>
              </SideToolIcon>
              摄像头
            </SideTool>

            <SideIcon $mt={270}>
              <svg width="20" height="24" viewBox="0 0 20 24">
                <rect x="5" y="1" width="10" height="16" rx="5" fill="#3e4a44" />
                <path d="M1 10 C1 22 19 22 19 10 C17 18 3 18 1 10 Z M9 19 H11 V24 H9 Z" fill="#85878a" />
              </svg>
            </SideIcon>
            <SideIcon $mt={8}>
              <svg width="26" height="22" viewBox="0 0 26 22">
                <path d="M0 7 H5 L13 1 V21 L5 15 H0 Z" fill="#a9aaac" />
                <path d="M16 7 Q18 11 16 15 M19 4 Q23 11 19 18 M22 2 Q27 11 22 20" fill="none" stroke="#a9aaac" strokeWidth="1.5" />
              </svg>
            </SideIcon>
            <SideIcon $mt={8}>
              <svg width="20" height="22" viewBox="0 0 20 22">
                <path d="M6 4 L19 1 V16 M6 4 V19" fill="none" stroke="#a9aaac" strokeWidth="2" />
                <ellipse cx="3.6" cy="19" rx="3.4" ry="2.6" fill="#a9aaac" />
                <ellipse cx="16.2" cy="16" rx="3.4" ry="2.6" fill="#a9aaac" />
              </svg>
            </SideIcon>
            <SideIcon $mt={17}>
              <svg width="20" height="20" viewBox="0 0 20 20">
                <path d="M0 0 H8 L5 3 L9 7 L7 9 L3 5 L0 8 Z M20 0 V8 L17 5 L13 9 L11 7 L15 3 L12 0 Z M0 20 V12 L3 15 L7 11 L9 13 L5 17 L8 20 Z M20 20 H12 L15 17 L11 13 L13 11 L17 15 L20 12 Z" fill="#5e6063" />
              </svg>
            </SideIcon>
            <SideRule />
            <SideIcon $mt={29}>
              <svg width="30" height="30" viewBox="0 0 30 30">
                <circle cx="13" cy="17" r="11.5" fill="none" stroke="#adaeb0" strokeWidth="2.6" />
                <circle cx="13" cy="17" r="2" fill="#adaeb0" />
                <path d="M7 7 L9 1 H18 L20 7 Z" fill="#adaeb0" />
                <path d="M22 5 Q27 9 27 15" fill="none" stroke="#adaeb0" strokeWidth="1" />
              </svg>
            </SideIcon>
            <BellLabel>下课</BellLabel>

            <Stats>
              <Timer>00:10:00</Timer>
              <StatLabel>累计丢包:</StatLabel>
              <StatValue>31906</StatValue>
              <StatLabel>网络监控:</StatLabel>
              <Monitor width="71" height="39" viewBox="0 0 71 39">
                <rect width="71" height="39" fill="#55565a" />
                {bars.map((h, i) => (
                  <rect key={i} x={1 + i * 2.1} y={39 - h} width="1.1" height={h} fill="#a2a3a6" />
                ))}
                <rect x="68" width="2" height="39" fill="#d32030" />
                <rect y="14" width="1.5" height="25" fill="#d32030" />
              </Monitor>
            </Stats>
          </Side>

          <Main>
            <Tabs>
              <Tab $on>讨论</Tab>
              <Tab>成员(54)</Tab>
              <WatermarkLogo width="66" height="52" viewBox="0 0 66 52">
                <path d="M33 1 L64 23 L33 50 L2 30 Z" fill="none" stroke="#c8c8c8" strokeWidth="1.2" />
                <path d="M27 14 L40 23 L27 32 Z" fill="none" stroke="#c8c8c8" strokeWidth="1.2" />
              </WatermarkLogo>
              <Watermark>腾讯课堂</Watermark>
              <Megaphone>
                <svg width="20" height="14" viewBox="0 0 20 14">
                  <path d="M0 4 H4 L11 0 V14 L4 10 H0 Z" fill="#fff" />
                  <path d="M14 3 V5 M14 7 V9 M17 5 V7" stroke="#fff" strokeWidth="2" />
                </svg>
              </Megaphone>
            </Tabs>
            <ChatWrap>
              <Chat>
                <QrClip>
                  <Qr d={qrA} />
                </QrClip>
                <Author>
                  <RoleTag>助教</RoleTag>
                  Amu
                </Author>
                <Msg>
                  需要公开课视频+源码资源，赶紧加微信，课后获取
                  <br />
                  或者添加微信号：<WechatNo>·17771464380</WechatNo>
                </Msg>
                <Promo>加微信群+技术答疑+精选视频分享</Promo>
                <QrBlock>
                  <Qr d={qrB} />
                  <QrLogo>
                    <svg width="26" height="16" viewBox="0 0 26 16">
                      <path d="M2 14 C4 6 8 6 10 12 C11 6 14 5 16 12" fill="none" stroke="#2a7cc0" strokeWidth="2" />
                      <path d="M13 6 C17 1 21 2 24 4 C20 4 17 6 16 9 Z" fill="#6cb83c" />
                    </svg>
                    <span>软课教育</span>
                  </QrLogo>
                </QrBlock>
                <Thread>
                  {chats.map(([a, b], i) => (
                    <Pair key={i}>
                      <Nick>{a}</Nick>
                      <Said>{b}</Said>
                    </Pair>
                  ))}
                </Thread>
              </Chat>
              <ChatTrack>
                <ChatThumb />
              </ChatTrack>
            </ChatWrap>
            <InputBar>
              <svg width="21" height="21" viewBox="0 0 21 21">
                <circle cx="10.5" cy="10.5" r="9" fill="none" stroke="#8c8c8c" strokeWidth="2" />
                <circle cx="7" cy="8" r="1.5" fill="#8c8c8c" />
                <circle cx="14" cy="8" r="1.5" fill="#8c8c8c" />
                <path d="M5.5 12 Q10.5 18 15.5 12" fill="none" stroke="#8c8c8c" strokeWidth="1.8" />
              </svg>
              <svg width="18" height="20" viewBox="0 0 18 20">
                <circle cx="4" cy="16" r="2.8" fill="none" stroke="#8c8c8c" strokeWidth="1.8" />
                <circle cx="14" cy="16" r="2.8" fill="none" stroke="#8c8c8c" strokeWidth="1.8" />
                <path d="M5.5 13.5 L14 0 M12.5 13.5 L4 0" stroke="#8c8c8c" strokeWidth="2" />
              </svg>
              <svg width="23" height="18" viewBox="0 0 23 18" style={{ marginLeft: 3 }}>
                <rect x="1" y="1" width="21" height="16" fill="none" stroke="#8c8c8c" strokeWidth="2" />
                <path d="M3 15 L9 8 L13 12 L16 7 L20 15 Z" fill="#8c8c8c" />
                <circle cx="7" cy="6" r="1.5" fill="#8c8c8c" />
              </svg>
              <Spacer />
              <svg width="23" height="20" viewBox="0 0 23 20">
                <circle cx="9" cy="6" r="5.5" fill="#8c8c8c" />
                <path d="M0 19 Q9 6 15 14 V19 Z" fill="#8c8c8c" />
                <rect x="13" y="11" width="9.5" height="8" fill="#fff" stroke="#8c8c8c" strokeWidth="1.4" />
                <path d="M15 15 H20" stroke="#8c8c8c" />
              </svg>
              <svg width="20" height="20" viewBox="0 0 20 20">
                <path d="M10 2 L12.5 5 H16.5 L15 9 L18 12 L14.5 13.5 L13.5 17.5 L10 15.5 L6.5 17.5 L5.5 13.5 L2 12 L5 9 L3.5 5 H7.5 Z" fill="none" stroke="#8c8c8c" strokeWidth="2.2" />
                <circle cx="10" cy="10" r="2.6" fill="none" stroke="#8c8c8c" strokeWidth="1.4" />
              </svg>
            </InputBar>
            <Compose>
              <SendBtn>
                <SendLabel>发 送</SendLabel>
                <SendDrop>
                  <SendCaret />
                </SendDrop>
              </SendBtn>
            </Compose>
          </Main>
        </Panel>

        <Corner $l={0} $t={3} $w={26} $h={3} />
        <Corner $l={0} $t={3} $w={4} $h={25} />
        <Corner $l={2} $t={1003} $w={4} $h={25} />
        <Corner $l={2} $t={1025} $w={24} $h={3} />
        <Corner $l={1506} $t={3} $w={25} $h={3} />
        <Corner $l={1527} $t={3} $w={3} $h={25} />
        <Corner $l={1506} $t={1025} $w={25} $h={3} />
        <Corner $l={1528} $t={1003} $w={3} $h={25} />
        <Corner $l={728} $t={0} $w={76} $h={4} />
      </Desktop>
    </>
  );
}
